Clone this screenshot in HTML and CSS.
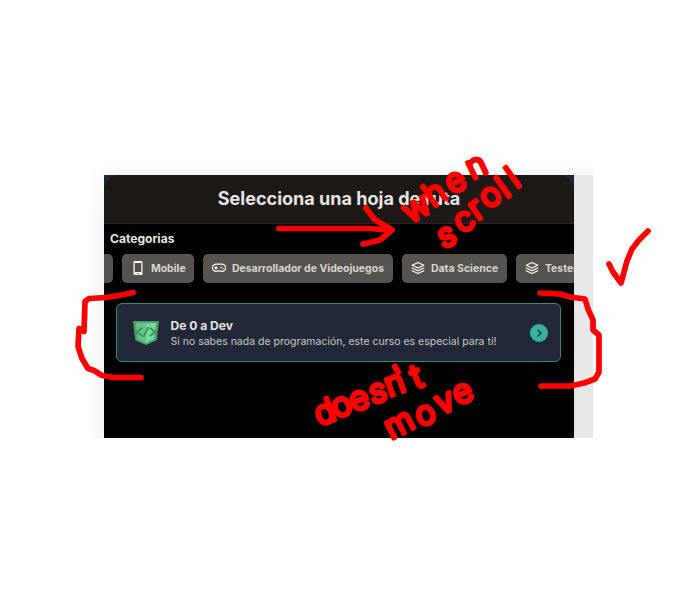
FILE: index.html
```html
<!DOCTYPE html>
<html lang="es">
<head>
<meta charset="utf-8">
<title>Selecciona una hoja de ruta</title>
<link rel="stylesheet" href="styles.css">
</head>
<body>
<svg class="defs" width="0" height="0" aria-hidden="true">
  <symbol id="layers" viewBox="0 0 24 24"><path d="M12 2.500 2 7.300l10 4.800 10-4.800zM2 12l10 4.800L22 12M2 16.700l10 4.800 10-4.800" fill="none" stroke="currentColor" stroke-width="1.900" stroke-linejoin="round" stroke-linecap="round"/></symbol>
</svg>
<main class="capture">
  <div class="app">
    <header class="header"><h1>Selecciona una hoja de ruta</h1></header>
    <h2 class="label">Categorias</h2>
    <nav class="chips">
      <button class="chip previous" aria-label="Anterior"></button>
      <button class="chip mobile"><svg viewBox="0 0 14 14"><path fill="currentColor" fill-rule="evenodd" d="M3.500 0h7q1 0 1 1v12q0 1-1 1h-7q-1 0-1-1V1q0-1 1-1zM3.700 2v9h6.600V2zM7 11.900a.7.7 0 1 0 .1 0z"/></svg><span>Mobile</span></button>
      <button class="chip games"><svg viewBox="0 0 14 14"><g fill="none" stroke="currentColor" stroke-width="1.200"><path d="M4 3.200h6a3.600 3.600 0 1 1-2 6.600H6A3.600 3.600 0 1 1 4 3.200z"/><path d="M4 5.200v3.200M2.400 6.800h3.200"/></g><circle cx="9" cy="6.200" r=".8" fill="currentColor"/><circle cx="10.700" cy="7.500" r=".8" fill="currentColor"/></svg><span>Desarrollador de Videojuegos</span></button>
      <button class="chip data"><svg><use href="#layers"/></svg><span>Data Science</span></button>
      <button class="chip tester"><svg><use href="#layers"/></svg><span>Tester</span></button>
    </nav>
    <article class="card">
      <svg class="shield" viewBox="0 0 26 26"><path fill="#4f9f72" d="M0 1h26l-2.300 19.300L13 25 2.300 20.300z"/><path fill="#61c687" d="M3 3h10v20l-8.300-4z"/><path fill="#70dc94" d="M13 3h10l-1.700 16-8.300 4z"/><path d="m9 8-5 4 5 4m8-8 5 4-5 4M15.500 7l-5 10" fill="none" stroke="#418a63" stroke-width="1.800"/></svg>
      <div class="copy"><h3>De 0 a Dev</h3><p>Si no sabes nada de programación, este curso es especial para ti!</p></div>
      <svg class="go" viewBox="0 0 18 18"><circle cx="9" cy="9" r="9" fill="#38b2a0"/><path d="m7.500 5.700 3.500 3.400-3.500 3.400" fill="none" stroke="#18343b" stroke-width="1.400"/></svg>
    </article>
  </div>
</main>
<svg class="notes" viewBox="0 0 685 606">
  <g class="ink">
    <path d="M279 228.500H369L388 230M366 208l8 11 18 11-12 10-17 4"/>
    <path d="m133 292.500-14 3-13 2-17 1-4 3-1 30-5-3-1 18 4 12 6 10 6 2 8 5 12 2h27"/>
    <path d="m540 293 20 1 10 3 15 2 3 10 5 11v10l6 5v37l-4 7-11 4-9 2-4 1h-30"/>
    <path d="m609 264 4 8 8 11 3-11 3-11 5-12 7-9 9-9"/>
  </g>
  <g class="script">
    <text x="410 433 452 472" y="224 208 195 180" rotate="-30 -35 -30 -25">when</text>
    <text x="443 461 477 488 506 516" y="249 234 221 210 199 189" rotate="-25 -30 -35 -35 -35 -35">scroll</text>
    <text x="319 336 353 372 389 402 416" y="426 419 412 404 397 389 389" rotate="-20 -22 -18 -15 -20 -30 -22">doesn't</text>
    <text x="391 419 440 458" y="440 427 415 406" rotate="-27 -18 -22 -25">move</text>
  </g>
</svg>
</body>
</html>
```
FILE: styles.css
```css
* { box-sizing: border-box; }
body { margin: 0; background: #fff; font-family: Inter, sans-serif; width: 685px; height: 606px; overflow: hidden; }
h1, h2, h3, p { margin: 0; }
.defs { position: absolute; }
.capture { width: 509px; height: 271px; margin: 167px 0 0 84px; padding: 8px 0 0 20px; overflow: hidden; background: linear-gradient(#e8e8e8, #e8e8e8) 490px 8px / 19px 263px no-repeat, linear-gradient(90deg, #fff 3px, transparent 36px), linear-gradient(#fcfcfc, #f5f6f6 8px, #ebebeb 50px); }
.app { width: 470px; height: 263px; background: #000; overflow: hidden; }
.header { height: 49px; display: flex; justify-content: center; align-items: center; border-bottom: 1px solid #292724; background: radial-gradient(circle at 16px 16px, transparent 16px, #1c2739 16.5px) 0 0 / 16px 16px no-repeat, radial-gradient(circle at 0 16px, transparent 16px, #1c2739 16.5px) 100% 0 / 16px 16px no-repeat, #1c1917; }
h1 { color: #e7e5e4; font-size: 18.050px; line-height: 28px; font-weight: 700; }
.label { padding: 6px 0 0 6px; height: 30px; color: #e7e5e4; font-size: 12.050px; line-height: 17px; font-weight: 700; }
.chips { display: flex; gap: 9px; height: 29px; overflow: hidden; }
.chip { flex: none; height: 28.500px; display: flex; align-items: center; gap: 6px; margin: 0; padding: 0 8.500px; border: 0; border-radius: 5px; background: #57534e; color: #d6d3d1; font: 700 10.500px Inter, sans-serif; white-space: nowrap; }
.chip svg { width: 14px; height: 14px; flex: none; color: #fff; }
.previous { width: 9.400px; padding: 0; border-radius: 0 5px 5px 0; }
.mobile { width: 72px; }
.games { width: 190px; }
.data { width: 105px; }
.tester { width: 84px; }
.card { display: flex; align-items: center; width: 445.400px; height: 59px; margin: 20px 0 0 12px; padding: 0 12px 0 15.500px; border: 1px solid #2b8c80; border-radius: 6px; background: #222838; }
.shield { width: 26px; height: 26px; }
.copy { flex: 1; margin-left: 12px; padding-top: 1px; white-space: nowrap; }
h3 { color: #e7e5e4; font-size: 12.050px; line-height: 16px; font-weight: 700; }
p { color: #c8c9cc; font-size: 10.500px; line-height: 15px; }
.go { width: 18px; height: 18px; }
.notes { position: absolute; inset: 0; width: 685px; height: 606px; pointer-events: none; }
.ink { fill: none; stroke: #f00; stroke-width: 5.700px; stroke-linecap: round; stroke-linejoin: round; }
.script { font: 300 33px Inter, sans-serif; fill: #f00; stroke: #f00; stroke-width: 3.700px; stroke-linejoin: round; }
```
